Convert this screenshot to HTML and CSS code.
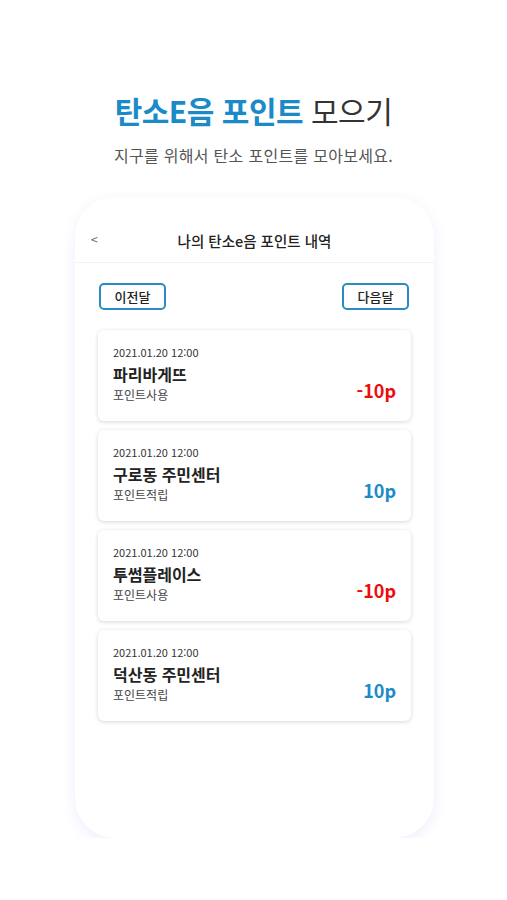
FILE: index.html
```html
<!DOCTYPE html>
<html lang="ko">
<head>
  <meta charset="UTF-8">
  <meta name="viewport" content="width=device-width, initial-scale=1.0">
  <title>탄소E음 포인트 모으기</title>
  <link rel="stylesheet" href="styles.css">
</head>
<body>
  <header class="hero">
    <h1><span class="accent">탄소E음 포인트</span> 모으기</h1>
    <p>지구를 위해서 탄소 포인트를 모아보세요.</p>
  </header>
  <main class="phone">
    <div class="topbar">
      <span class="back">&lt;</span>
      <span class="topbar-title">나의 탄소e음 포인트 내역</span>
    </div>
    <div class="month-nav">
      <button class="btn">이전달</button>
      <button class="btn">다음달</button>
    </div>
    <ul class="history">
      <li class="card">
        <div class="info">
          <div class="date">2021.01.20 12:00</div>
          <div class="place">파리바게뜨</div>
          <div class="kind">포인트사용</div>
        </div>
        <div class="amount minus">-10p</div>
      </li>
      <li class="card">
        <div class="info">
          <div class="date">2021.01.20 12:00</div>
          <div class="place">구로동 주민센터</div>
          <div class="kind">포인트적립</div>
        </div>
        <div class="amount plus">10p</div>
      </li>
      <li class="card">
        <div class="info">
          <div class="date">2021.01.20 12:00</div>
          <div class="place">투썸플레이스</div>
          <div class="kind">포인트사용</div>
        </div>
        <div class="amount minus">-10p</div>
      </li>
      <li class="card">
        <div class="info">
          <div class="date">2021.01.20 12:00</div>
          <div class="place">덕산동 주민센터</div>
          <div class="kind">포인트적립</div>
        </div>
        <div class="amount plus">10p</div>
      </li>
    </ul>
  </main>
</body>
</html>
```

FILE: styles.css
```css
body {
  font-family: "Noto Sans CJK KR", "Noto Sans", sans-serif;
  margin: 0;
  padding: 0;
  background-color: #fff;
  color: #222;
}

.hero {
  text-align: center;
  padding-top: 90px;
}

.hero h1 {
  margin: 0;
  font-size: 30px;
  line-height: 40px;
  font-weight: 400;
  color: #333;
  letter-spacing: -0.5px;
}

.hero .accent {
  color: #1b8bc8;
  font-weight: 700;
}

.hero p {
  margin: 14px 0 0;
  font-size: 16px;
  line-height: 22px;
  color: #555;
  letter-spacing: 0.3px;
}

.phone {
  width: 359px;
  height: 641px;
  margin: 31px 0 0 75px;
  box-sizing: border-box;
  border-radius: 40px;
  background: #fff;
  box-shadow: 0 4px 14px rgba(110, 120, 240, 0.12);
  overflow: hidden;
}

.topbar {
  position: relative;
  height: 66px;
  box-sizing: border-box;
  padding-top: 31px;
  border-bottom: 1px solid #f1f1f1;
  text-align: center;
}

.back {
  position: absolute;
  left: 16px;
  top: 33px;
  font-size: 12px;
  color: #666;
}

.topbar-title {
  font-size: 14.5px;
  line-height: 20px;
  font-weight: 500;
  color: #222;
}

.month-nav {
  display: flex;
  justify-content: space-between;
  padding: 20px 25px 0 24px;
}

.btn {
  width: 67px;
  height: 27px;
  box-sizing: border-box;
  border: 2px solid #2a8cc4;
  border-radius: 5px;
  background: #fff;
  font-family: inherit;
  font-size: 13px;
  font-weight: 500;
  color: #222;
  padding: 0;
  cursor: pointer;
}

.history {
  list-style: none;
  margin: 20px 0 0;
  padding: 0 23px;
  display: flex;
  flex-direction: column;
  gap: 9px;
}

.card {
  height: 91px;
  box-sizing: border-box;
  padding: 15px 15px 0 15px;
  border-radius: 6px;
  background: #fff;
  box-shadow: 0 1px 4px rgba(0, 0, 0, 0.16);
  display: flex;
  justify-content: space-between;
}

.date {
  font-size: 11px;
  line-height: 14px;
  color: #333;
}

.place {
  margin-top: 5px;
  font-size: 16px;
  line-height: 20px;
  font-weight: 700;
  color: #222;
}

.kind {
  margin-top: 3px;
  font-size: 12px;
  line-height: 16px;
  color: #444;
}

.amount {
  align-self: flex-start;
  margin-top: 33px;
  font-size: 18px;
  line-height: 24px;
  font-weight: 700;
}

.minus {
  color: #ee0d0d;
}

.plus {
  color: #1b8bc8;
}
```
